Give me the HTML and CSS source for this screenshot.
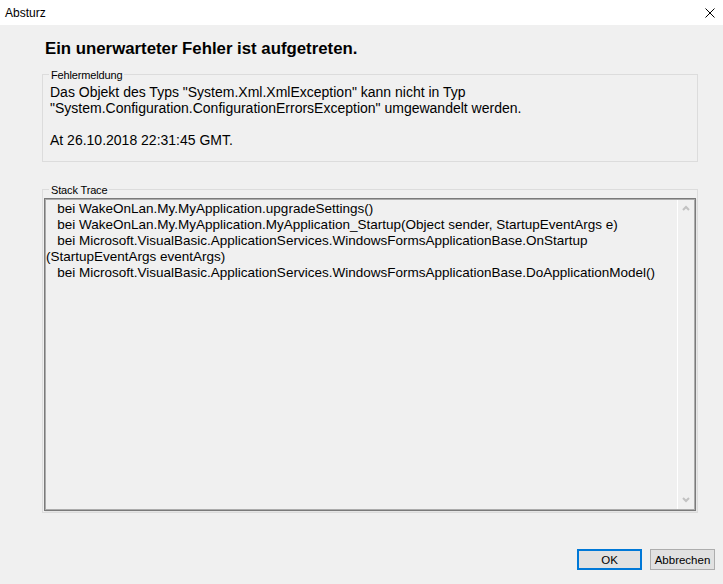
FILE: index.html
```html
<!DOCTYPE html>
<html lang="de">
<head>
    <meta charset="UTF-8">
    <title>Absturz</title>
    <link rel="stylesheet" href="styles.css">
</head>
<body>
    <div class="window">
        <div class="titlebar">
            <span class="title">Absturz</span>
            <span class="close">
                <svg width="10" height="10" viewBox="0 0 10 10"><path d="M0.5 0.5 L9.5 9.5 M9.5 0.5 L0.5 9.5" stroke="#000" stroke-width="1" fill="none"/></svg>
            </span>
        </div>

        <div class="content">
            <h1 class="headline">Ein unerwarteter Fehler ist aufgetreten.</h1>

            <fieldset class="group message">
                <legend>Fehlermeldung</legend>
                <p>Das Objekt des Typs "System.Xml.XmlException" kann nicht in Typ "System.Configuration.ConfigurationErrorsException" umgewandelt werden.</p>
                <p>At 26.10.2018 22:31:45 GMT.</p>
            </fieldset>

            <fieldset class="group trace">
                <legend>Stack Trace</legend>
                <div class="textbox">
                    <div class="trace-text">   bei WakeOnLan.My.MyApplication.upgradeSettings()
   bei WakeOnLan.My.MyApplication.MyApplication_Startup(Object sender, StartupEventArgs e)
   bei Microsoft.VisualBasic.ApplicationServices.WindowsFormsApplicationBase.OnStartup<wbr>(StartupEventArgs eventArgs)
   bei Microsoft.VisualBasic.ApplicationServices.WindowsFormsApplicationBase.DoApplicationModel()</div>
                    <div class="scrollbar">
                        <span class="arrow"><svg width="8" height="6" viewBox="0 0 8 6"><path d="M1 5 L4 2 L7 5" stroke="#c2c2c2" stroke-width="2" fill="none"/></svg></span>
                        <span class="arrow"><svg width="8" height="6" viewBox="0 0 8 6"><path d="M1 1 L4 4 L7 1" stroke="#c2c2c2" stroke-width="2" fill="none"/></svg></span>
                    </div>
                </div>
            </fieldset>

            <div class="buttons">
                <button class="btn default">OK</button>
                <button class="btn">Abbrechen</button>
            </div>
        </div>
    </div>
</body>
</html>
```

FILE: styles.css
```css
body {
    margin: 0;
    background: #f0f0f0;
    font-family: "Liberation Sans", Arial, sans-serif;
    color: #000;
}
.window {
    width: 723px;
    height: 584px;
    display: flex;
    flex-direction: column;
    background: #f0f0f0;
}
.titlebar {
    height: 25px;
    background: #fff;
    display: flex;
    align-items: center;
    justify-content: space-between;
    padding: 0 5px 0 5px;
}
.title {
    font-size: 12px;
}
.close {
    display: flex;
    width: 10px;
    height: 10px;
    margin-right: 3px;
}
.content {
    flex: 1;
    padding: 0 25px 14px 42px;
    display: flex;
    flex-direction: column;
}
.headline {
    margin: 15px 0 0 0;
    padding-left: 3px;
    font-size: 16.8px;
    line-height: 18px;
    font-weight: bold;
}
.group {
    margin: 0;
    border: 1px solid #dcdcdc;
    min-width: 0;
}
.group legend {
    font-size: 11px;
    letter-spacing: -0.15px;
    line-height: 13px;
    padding: 3px 2px 0 2px;
    margin-left: 5px;
}
.message {
    margin-top: 8px;
    padding: 2px 7px 13px 7px;
    font-size: 14px;
    line-height: 16px;
}
.message legend {
    margin-left: -1px;
}
.message p {
    margin: 0;
}
.message p + p {
    margin-top: 16px;
}
.trace {
    margin-top: 19px;
    padding: 1px 1px 1px 1px;
}
.textbox {
    height: 313px;
    box-sizing: border-box;
    border: 1px solid #7a7a7a;
    box-shadow: inset 0 0 0 1px #ababab, 1px 1px 0 #e6e6e6;
    display: flex;
    background: #f0f0f0;
}
.trace-text {
    flex: 1;
    padding: 2px 0 0 1px;
    font-size: 13.5px;
    line-height: 16px;
    white-space: pre-wrap;
}
.scrollbar {
    width: 16px;
    margin: 1px 1px 1px 0;
    border-left: 1px solid #fff;
    display: flex;
    flex-direction: column;
    justify-content: space-between;
    align-items: center;
    padding: 5px 0 6px 0;
}
.arrow {
    display: flex;
}
.buttons {
    margin-top: auto;
    display: flex;
    justify-content: flex-end;
    gap: 8px;
    margin-right: -17px;
}
.btn {
    width: 65px;
    height: 21px;
    background: #e1e1e1;
    border: 1px solid #adadad;
    font-family: "Liberation Sans", Arial, sans-serif;
    font-size: 11.5px;
    padding: 0;
    color: #000;
}
.btn.default {
    border: 2px solid #0078d7;
}
```
